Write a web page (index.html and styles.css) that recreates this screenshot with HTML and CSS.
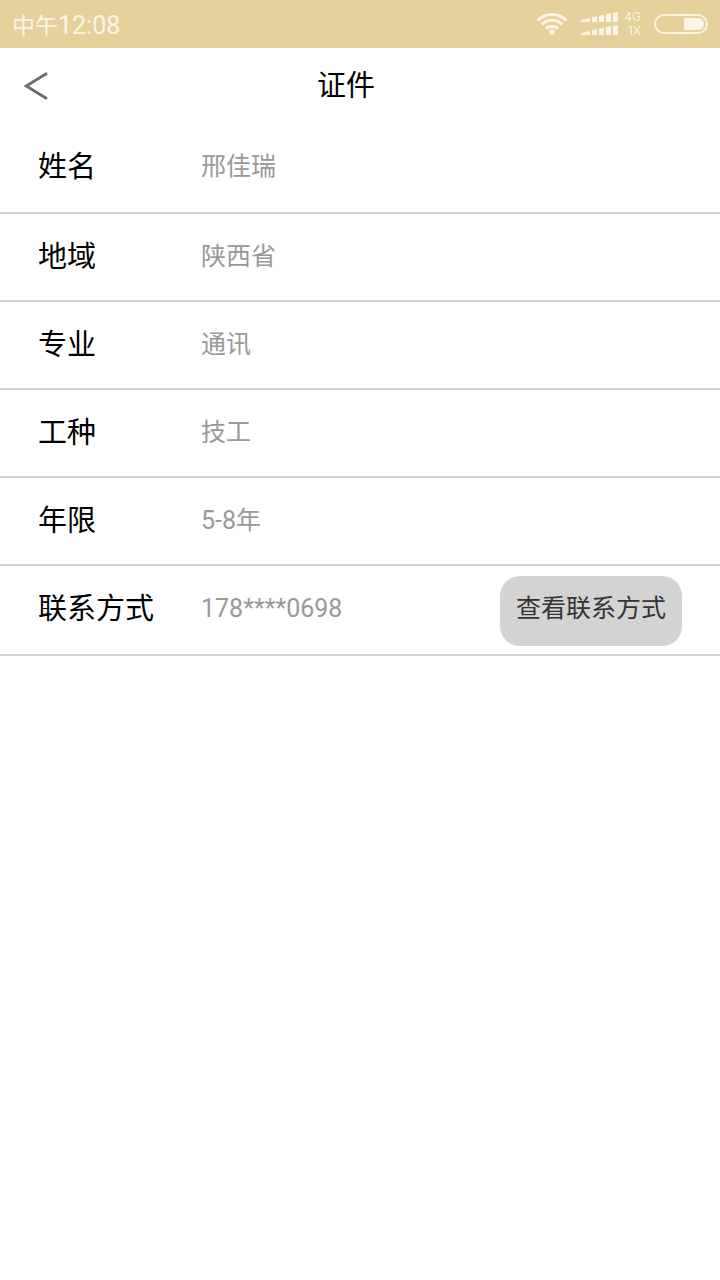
FILE: index.html
```html
<!DOCTYPE html>
<html lang="zh-CN">
  <head>
    <meta charset="UTF-8" />
    <meta name="viewport" content="width=device-width, initial-scale=1.0" />
    <title>证件</title>
    <link rel="stylesheet" href="styles.css">
  </head>
  <body>
    <div class="status">
      <div class="clock"><span class="period">中午</span>12:08</div>
      <svg class="wifi" width="32" height="24" viewBox="0 0 32 24" fill="none" stroke="currentColor" stroke-width="3">
        <path d="M1.5 8.5a20.5 20.5 0 0 1 29 0" />
        <path d="M5.7 12.6a14.5 14.5 0 0 1 20.6 0" />
        <path d="M9.9 16.6a8.8 8.8 0 0 1 12.2 0" />
        <circle cx="16" cy="20" r="2.7" fill="currentColor" stroke="none" />
      </svg>
      <svg class="signal" width="38" height="24" viewBox="0 0 38 24" fill="currentColor">
        <path id="bars" d="M0 10V8l9-2v4zM11 10V5.3l5-1V10zM18 10V3.7l5-1V10zM25 10V2l5-1V10zM32 10V1l5-1v10z" />
        <use href="#bars" y="13" />
      </svg>
      <div class="network">4G<br />1X</div>
      <svg class="battery" width="54" height="20" viewBox="0 0 54 20">
        <rect x="1" y="1" width="52" height="18" rx="9" fill="none" stroke="currentColor" stroke-width="2" />
        <path d="M30 4h14a6 6 0 0 1 0 12H30z" fill="currentColor" />
      </svg>
    </div>

    <header class="header">
      <button class="back" type="button" aria-label="返回">
        <svg width="24" height="28" viewBox="0 0 24 28" fill="none" stroke="#6b6b6b" stroke-width="2.8">
          <path d="M23 1.2L2.2 14 23 26.8" />
        </svg>
      </button>
      <h1 class="title">证件</h1>
    </header>

    <main>
      <dl class="list">
        <div class="row">
          <dt>姓名</dt>
          <dd>邢佳瑞</dd>
        </div>
        <div class="row">
          <dt>地域</dt>
          <dd>陕西省</dd>
        </div>
        <div class="row">
          <dt>专业</dt>
          <dd>通讯</dd>
        </div>
        <div class="row">
          <dt>工种</dt>
          <dd>技工</dd>
        </div>
        <div class="row">
          <dt>年限</dt>
          <dd>5-8年</dd>
        </div>
        <div class="row">
          <dt>联系方式</dt>
          <dd>178****0698</dd>
          <dd class="action"><button class="contact" type="button">查看联系方式</button></dd>
        </div>
      </dl>
    </main>
  </body>
</html>
```
FILE: styles.css
```css
* {
  box-sizing: border-box;
}

body {
  background: #fff;
  color: #000;
  font-family: Roboto, "Noto Sans CJK SC", sans-serif;
  margin: 0;
}

button {
  border: 0;
  font: inherit;
}

.status {
  align-items: center;
  background: #e5d19b;
  color: #fbf5e8;
  display: flex;
  height: 48px;
  padding: 0 12px;
}

.clock {
  flex: 1;
  font-size: 25px;
  line-height: 44px;
  padding-top: 4px;
}

.period {
  font-size: 23px;
}

.signal {
  margin-left: 13px;
}

.network {
  font-family: Inter, sans-serif;
  font-size: 12px;
  line-height: 14px;
  margin-left: 4px;
  text-align: right;
  width: 18px;
}

.battery {
  margin-left: 13px;
}

.header {
  align-items: center;
  display: flex;
  height: 76px;
  padding: 0 76px 0 24px;
}

.back {
  background: none;
  padding: 0;
}

.back svg {
  display: block;
}

.title {
  flex: 1;
  font-size: 29px;
  font-weight: 400;
  line-height: 44px;
  margin: 0;
  text-align: center;
}

.list {
  margin: 0;
}

.row {
  align-items: start;
  border-bottom: 2px solid #d3d3d3;
  display: grid;
  grid-template-columns: 163px 1fr auto;
  line-height: 44px;
  min-height: 88px;
  padding: 10px 38px 8px;
}

.row:first-child {
  min-height: 90px;
}

dt,
dd {
  margin: 0;
  padding-top: 11px;
}

dt {
  font-size: 29px;
}

dd {
  color: #999;
  font-size: 25px;
}

.action {
  padding: 0;
}

.contact {
  background: #d3d3d3;
  border-radius: 20px;
  color: #333;
  display: block;
  padding: 11px 16px 15px;
}
```
